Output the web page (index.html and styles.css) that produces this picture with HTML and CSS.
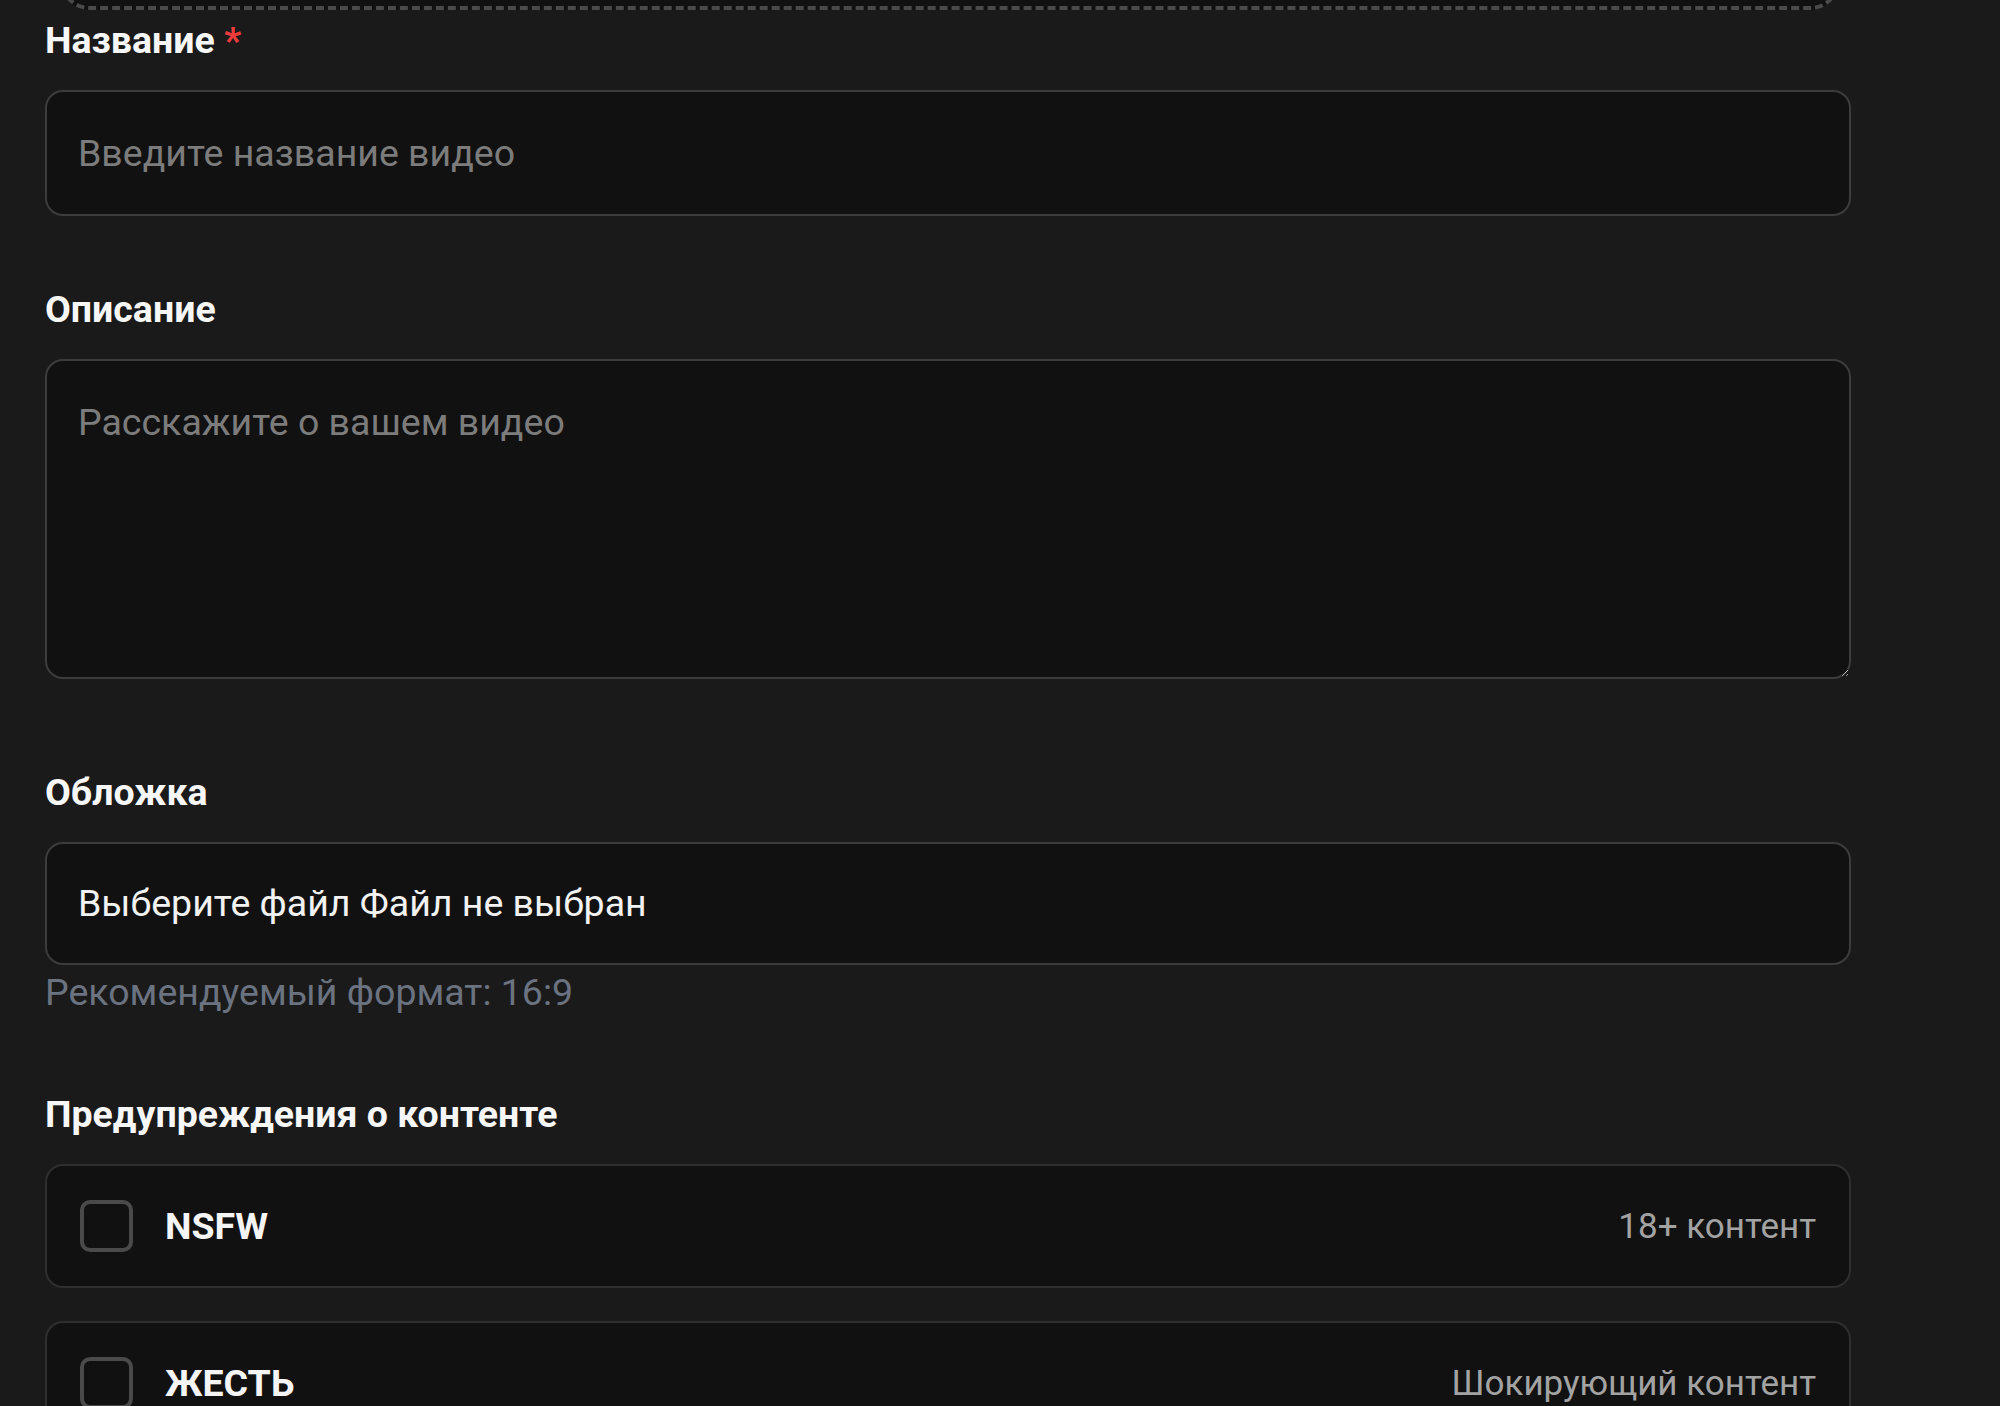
FILE: index.html
```html
<!DOCTYPE html>
<html lang="ru">
<head>
<meta charset="utf-8">
<title>Загрузка видео</title>
<link rel="stylesheet" href="styles.css">
</head>
<body>
<div class="form">
  <div class="dropzone"></div>

  <div class="field field-title">
    <label class="label" for="title">Название <span class="req">*</span></label>
    <input class="control" id="title" type="text" placeholder="Введите название видео">
  </div>

  <div class="field field-desc">
    <label class="label" for="desc">Описание</label>
    <textarea class="control textarea" id="desc" placeholder="Расскажите о вашем видео"></textarea>
  </div>

  <div class="field field-cover">
    <label class="label">Обложка</label>
    <div class="control file">Выберите файл Файл не выбран</div>
    <p class="hint">Рекомендуемый формат: 16:9</p>
  </div>

  <div class="field field-warn">
    <div class="label">Предупреждения о контенте</div>
    <div class="warn-list">
      <label class="warn">
        <span class="check"></span>
        <span class="warn-name">NSFW</span>
        <span class="warn-desc">18+ контент</span>
      </label>
      <label class="warn">
        <span class="check"></span>
        <span class="warn-name">ЖЕСТЬ</span>
        <span class="warn-desc">Шокирующий контент</span>
      </label>
    </div>
  </div>
</div>
</body>
</html>
```

FILE: styles.css
```css
html, body {
  margin: 0;
  padding: 0;
  background: #1a1a1a;
  height: 100%;
  overflow: hidden;
}

body {
  font-family: Roboto, "Noto Sans", "Liberation Sans", sans-serif;
  color: #f5f5f5;
}

.form {
  width: 1806px;
  margin-left: 45px;
  display: flex;
  flex-direction: column;
}

.dropzone {
  box-sizing: border-box;
  height: 88px;
  margin: -78px 12px 0 16px;
  background: #111111;
  border: 4px dashed #4a4a4a;
  border-radius: 28px;
}

.field {
  display: flex;
  flex-direction: column;
}

.field-title { margin-top: 8px; }
.field-desc { margin-top: 71px; }
.field-cover { margin-top: 91px; }
.field-warn { margin-top: 78px; }

.label {
  display: block;
  font-size: 37.5px;
  line-height: 44px;
  font-weight: 700;
  color: #f7f7f7;
  margin-bottom: 28px;
}

.req {
  color: #ef3b3b;
}

.control {
  box-sizing: border-box;
  width: 100%;
  margin: 0;
  background: #111111;
  border: 2px solid #3c3c3c;
  border-radius: 18px;
  font-family: inherit;
  font-size: 37.5px;
  line-height: 54px;
  color: #f2f2f2;
  padding: 33px 31px;
  outline: none;
  display: block;
}

.control::placeholder {
  color: #7c7c7c;
  opacity: 1;
}

input.control {
  height: 126px;
}

.textarea {
  height: 320px;
  resize: vertical;
  padding-top: 34px;
  color-scheme: dark;
}

.file {
  height: 123px;
  padding-top: 32px;
}

.hint {
  margin: 5px 0 0;
  font-size: 37.5px;
  line-height: 44px;
  color: #6b7280;
}

.warn-list {
  display: flex;
  flex-direction: column;
  gap: 33px;
}

.warn {
  box-sizing: border-box;
  height: 124px;
  display: flex;
  align-items: center;
  padding: 0 33px;
  background: #111111;
  border: 2px solid #2f2f2f;
  border-radius: 18px;
}

.check {
  box-sizing: border-box;
  width: 53px;
  height: 52px;
  border: 4.5px solid #4a4a4a;
  border-radius: 10px;
  background: #111111;
  flex: none;
}

.warn-name {
  margin-left: 32px;
  font-size: 37.5px;
  font-weight: 700;
  color: #f5f5f5;
  flex: 1;
}

.warn-desc {
  font-size: 35px;
  color: #a3a3a3;
}
```
